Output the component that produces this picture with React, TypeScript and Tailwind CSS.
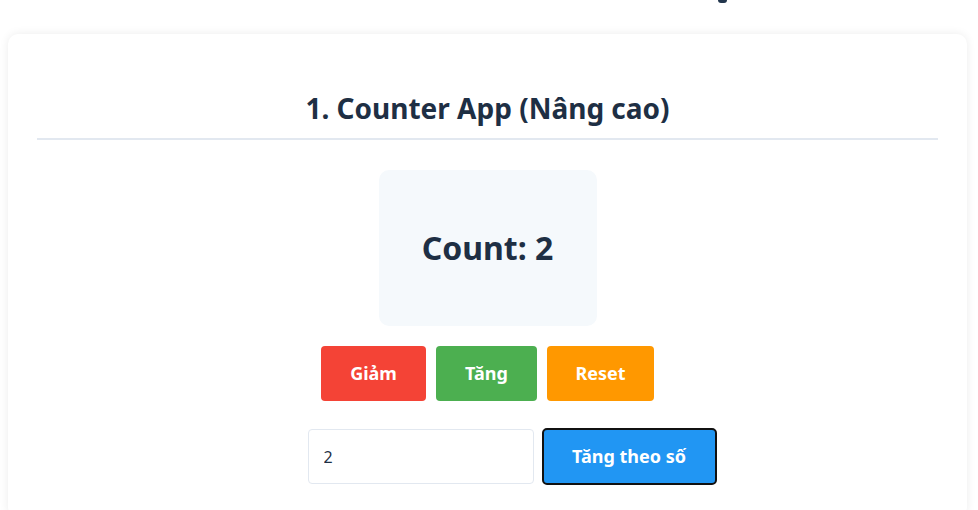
export default function App() {
  return (
    <div
      className="min-h-[510px] bg-white pl-2 pr-[11px] pb-4"
      style={{ fontFamily: '"Noto Sans", "Open Sans", sans-serif' }}
    >
      <div className="h-[34px] flex">
        <div className="ml-[710px] w-[9px] h-[3px] bg-[#22364d] rounded-b-sm" />
      </div>
      <div className="rounded-[10px] bg-white shadow-[0_0_10px_rgba(0,0,0,0.08)] px-[29px] pt-[55px] pb-8">
        <h2 className="text-center text-[28px] font-bold text-[#1e2f44] leading-[38px] pb-[11px] border-b-2 border-[#e2e8f0]">
          1. Counter App (Nâng cao)
        </h2>
        <div className="flex flex-col items-center">
          <div className="mt-[30px] w-[218px] h-[156px] rounded-[10px] bg-[#f5f9fc] flex items-center justify-center">
            <p className="text-[32px] font-bold text-[#1e2f44]">Count: 2</p>
          </div>
          <div className="mt-5 flex gap-[10px]">
            <button className="w-[105px] h-[55px] rounded bg-[#f44336] text-white text-[18px] font-bold">
              Giảm
            </button>
            <button className="w-[101px] h-[55px] rounded bg-[#4caf50] text-white text-[18px] font-bold">
              Tăng
            </button>
            <button className="w-[107px] h-[55px] rounded bg-[#ff9800] text-white text-[18px] font-bold">
              Reset
            </button>
          </div>
          <div className="mt-[27px] pl-[49px] flex items-center gap-2">
            <input
              type="number"
              defaultValue={2}
              className="w-[226px] h-[55px] rounded border border-[#e2e8f0] px-[15px] text-[16px] text-[#1e2f44] outline-none"
            />
            <button className="w-[175px] h-[57px] rounded-[5px] bg-[#2196f3] border-2 border-[#111] text-white text-[18px] font-bold">
              Tăng theo số
            </button>
          </div>
        </div>
      </div>
    </div>
  );
}
